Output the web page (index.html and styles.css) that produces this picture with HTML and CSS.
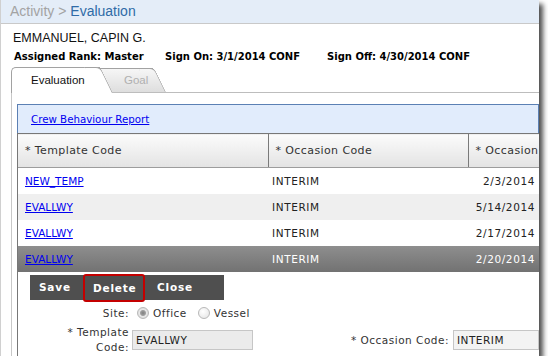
FILE: index.html
```html
<!doctype html>
<html lang="en">
    <head>
        <meta charset="utf-8">
        <title>Activity &gt; Evaluation</title>
        <link rel="stylesheet" href="styles.css">
    </head>
    <body>
        <div class="Ventana">
            <!-- Breadcrumb -->
            <div class="Ruta"><span class="RutaPadre">Activity &gt; </span><span class="RutaActual">Evaluation</span></div>

            <div class="Nombre">EMMANUEL, CAPIN G.</div>
            <div class="Datos">
                <span>Assigned Rank: Master</span>
                <span>Sign On: 3/1/2014 CONF</span>
                <span>Sign Off: 4/30/2014 CONF</span>
            </div>

            <!-- Tabs -->
            <div class="Tabs">
                <div class="Tab Activa">Evaluation</div>
                <div class="Tab">Goal</div>
            </div>

            <div class="Panel">
                <div class="Marco">
                    <div class="Informe"><a href="#">Crew Behaviour Report</a></div>

                    <table class="Tabla">
                        <colgroup><col class="C1"><col class="C2"><col class="C3"></colgroup>
                        <thead>
                            <tr><th>* Template Code</th><th>* Occasion Code</th><th>* Occasion</th></tr>
                        </thead>
                        <tbody>
                            <tr><td><a href="#">NEW_TEMP</a></td><td>INTERIM</td><td class="Fecha">2/3/2014</td></tr>
                            <tr class="Par"><td><a href="#">EVALLWY</a></td><td>INTERIM</td><td class="Fecha">5/14/2014</td></tr>
                            <tr><td><a href="#">EVALLWY</a></td><td>INTERIM</td><td class="Fecha">2/17/2014</td></tr>
                            <tr class="Seleccionada"><td><a href="#">EVALLWY</a></td><td>INTERIM</td><td class="Fecha">2/20/2014</td></tr>
                        </tbody>
                    </table>

                    <!-- Botones de la fila en edicion -->
                    <div class="Botones">
                        <span class="Boton Guardar">Save</span>
                        <span class="Boton Borrar">Delete</span>
                        <span class="Boton Cerrar">Close</span>
                    </div>

                    <div class="Formulario">
                        <label class="Etiqueta">Site:</label>
                        <div class="Radios">
                            <input type="radio" name="site" checked><span>Office</span>
                            <input type="radio" name="site"><span>Vessel</span>
                        </div>
                        <label class="Etiqueta">* Template<br>Code:</label>
                        <input class="Campo Gris" type="text" value="EVALLWY">
                        <label class="Etiqueta">* Occasion Code:</label>
                        <input class="Campo" type="text" value="INTERIM">
                    </div>
                </div>
            </div>
        </div>
    </body>
</html>
```

FILE: styles.css
```css
body { margin:0; background:#FFF; }

/* Ventana con sombra */
.Ventana {
    width:538px;
    height:356px;
    border-left:1px solid #D0D0D0;
    box-shadow:4px 4px 5px rgba(0,0,0,0.7);
    overflow:hidden;
    display:flex;
    flex-direction:column;
    font-family:"DejaVu Sans", sans-serif;
}

/* Breadcrumb */
.Ruta {
    height:23px;
    line-height:23px;
    padding-left:9px;
    background:#E4EDF8;
    border-bottom:1px solid #C9C9C9;
    font:14px/23px "Liberation Sans", sans-serif;
}
.RutaPadre  { color:#A3A3A3; }
.RutaActual { color:#2F6BA7; }

.Nombre {
    margin:6px 0 0 12px;
    font:12.5px/16px "Liberation Sans", sans-serif;
    color:#111;
}
.Datos {
    display:grid;
    grid-template-columns:151px 162px auto;
    margin:3px 0 0 13px;
    font-size:10px;
    font-weight:bold;
    line-height:16px;
    color:#000;
    white-space:nowrap;
}

/* Tabs */
.Tabs {
    display:flex;
    align-items:flex-end;
    height:25px;
    margin:2px 0 0 10px;
    border-bottom:1px solid #BDBDBD;
}
.Tab {
    position:relative;
    z-index:1;
    box-sizing:border-box;
    height:24px;
    border:1px solid #A2A2A2;
    border-right:0;
    border-bottom:0;
    background:linear-gradient(#F6F6F6, #DEDEDE);
    font:11.5px/23px "Liberation Sans", sans-serif;
    color:#B0B0B0;
}
/* Lado inclinado de la pestaña */
.Tab::after {
    content:"";
    position:absolute;
    top:-1px;
    bottom:0;
    right:-13px;
    width:15px;
    border-top:1px solid #A2A2A2;
    border-right:1px solid #A2A2A2;
    border-radius:0 5px 0 0;
    background:inherit;
    transform:skewX(26deg);
    transform-origin:0 100%;
    z-index:-1;
}
.Tab.Activa {
    z-index:2;
    width:89px;
    height:26px;
    margin-bottom:-1px;
    padding-left:19px;
    border-radius:5px 0 0 0;
    background:#FFF;
    color:#111;
    line-height:24px;
}
.Tab:not(.Activa) { width:57px; margin-left:-4px; padding-left:28px; border-left:0; }

/* Panel bajo las pestañas */
.Panel {
    flex:1;
    display:flex;
    margin-left:10px;
    padding:11px 0 0 5px;
    border-left:1px solid #C8C8C8;
}
.Marco {
    flex:1;
    min-width:0;
    border-left:1px solid #777;
}

.Informe {
    height:28px;
    margin-left:-1px;
    padding-left:13px;
    border:1px solid #5B80B4;
    border-bottom:0;
    background:#E1ECFC;
    font-size:10.25px;
    line-height:29px;
}
a { color:#0000F0; }

/* Tabla de plantillas */
.Tabla {
    table-layout:fixed;
    border-collapse:collapse;
    width:531px;
    font-size:10.5px;
    letter-spacing:0.6px;
    color:#222;
    white-space:nowrap;
}
.C1 { width:250px; }
.C2 { width:200px; }
.C3 { width:81px; }
.Tabla th {
    height:33px;
    padding:0 0 0 7px;
    border-top:1px solid #777;
    border-bottom:1px solid #9C9C9C;
    border-right:1px solid #7A7A7A;
    background:linear-gradient(#FBFBFB, #E3E3E3);
    font-size:11px;
    font-weight:normal;
    letter-spacing:0.4px;
    text-align:left;
    color:#333;
}
.Tabla td             { height:26px; padding:0 4px; }
.Tabla td:first-child { padding-left:7px; }
.Tabla td a           { font-size:10.5px; letter-spacing:0; }
.Tabla td.Fecha       { text-align:right; padding-right:14px; }
.Par                  { background:#EFEFEF; }
.Seleccionada         { background:linear-gradient(#8E8E8E, #727272); color:#FFF; }

/* Barra de botones */
.Botones {
    display:inline-flex;
    align-items:center;
    height:25px;
    margin:3px 0 0 12px;
    background:#4F4F4F;
}
.Boton {
    box-sizing:border-box;
    padding-left:9px;
    color:#FFF;
    font-size:10.5px;
    font-weight:bold;
    letter-spacing:0.8px;
    line-height:25px;
}
.Guardar { width:53px; }
.Borrar {
    width:62px;
    height:28px;
    padding-left:8px;
    border:2px solid #C40000;
    border-radius:3px;
    line-height:24px;
}
.Cerrar { width:79px; padding-left:12px; }

/* Formulario de edicion */
.Formulario {
    display:grid;
    grid-template-columns:114px 121px 200px 1fr;
    align-items:center;
    row-gap:4px;
    margin-top:5px;
    font-size:10.5px;
    letter-spacing:0.5px;
    color:#333;
}
.Etiqueta { text-align:right; padding-right:3px; line-height:15px; }
.Etiqueta:nth-of-type(3) { padding-right:4px; }
.Radios {
    grid-column:2 / span 3;
    display:flex;
    align-items:center;
    height:16px;
}
.Radios input {
    appearance:none;
    width:12px;
    height:12px;
    margin:0 4px 0 5px;
    border:1px solid #B8B8B8;
    border-radius:50%;
    background:radial-gradient(circle at 40% 35%, #FFF, #E2E2E2);
}
.Radios input:checked { background:radial-gradient(circle, #7F7F7F 0, #A0A0A0 2.5px, #E8E8E8 3.5px, #D6D6D6 6px); }
.Radios span:first-of-type { margin-right:6px; }
.Campo {
    box-sizing:border-box;
    width:100%;
    height:20px;
    margin:0;
    padding:0 0 0 3px;
    border:1px solid #C6C6C6;
    background:#F3F3F3;
    font:10.5px "DejaVu Sans", sans-serif;
    letter-spacing:0.5px;
    color:#222;
}
.Campo.Gris { background:#EBEBEB; }
```
